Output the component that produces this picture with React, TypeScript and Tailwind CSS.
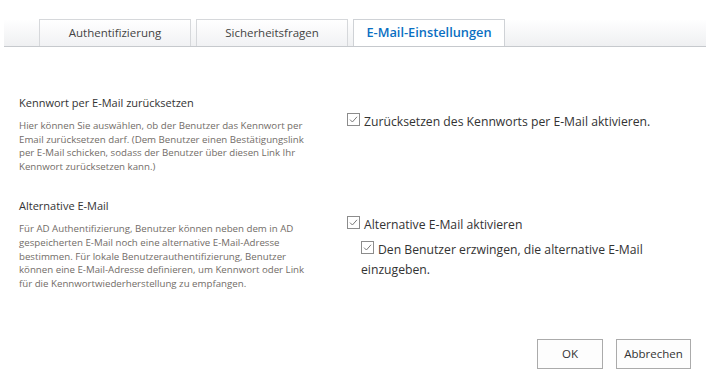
import React from "react"

const font = { fontFamily: '"Open Sans", "Noto Sans", Arial, sans-serif' }

const Check = () => (
  <span className="inline-block w-[13px] h-[13px] border border-[#8c8c8c] bg-white mr-[4px] shrink-0">
    <svg className="block" width="11" height="11" viewBox="0 0 11 11">
      <path d="M2 5.6 L4.4 8 L9 2.8" fill="none" stroke="#7a7a7a" strokeWidth="1" />
    </svg>
  </span>
)

const Tab = ({ label, active }: { label: string; active?: boolean }) => (
  <div
    className={
      active
        ? "w-[152px] h-[27px] border-t border-l border-r border-[#cfd2d6] bg-white flex items-center justify-center text-[12.8px] font-semibold text-[#0a6fc2]"
        : "w-[152px] h-[27px] border-t border-l border-r border-[#d6d8db] bg-gradient-to-b from-white to-[#f1f2f4] flex items-center justify-center text-[11.5px] text-[#444]"
    }>
    {label}
  </div>
)

const Section = ({
  title,
  lines,
  children,
}: {
  title: string
  lines: string[]
  children: React.ReactNode
}) => (
  <div className="grid grid-cols-[328px_1fr]">
    <div>
      <div className="text-[11px] leading-[16px] text-[#333]">{title}</div>
      <div className="mt-[8px] text-[9.7px] leading-[13.6px] text-[#726c67]">
        {lines.map((l) => (
          <div key={l}>{l}</div>
        ))}
      </div>
    </div>
    <div className="pt-[17px] text-[12.2px] leading-[20px] text-[#333]">{children}</div>
  </div>
)

export default function App() {
  return (
    <div className="w-[706px] h-[392px] bg-white flex flex-col" style={font}>
      <div className="mt-[19px] ml-[4px] h-[28px] pl-[35px] flex gap-[5px] border-b border-[#c6c9cd] bg-gradient-to-b from-white to-[#eff0f2]">
        <Tab label="Authentifizierung" />
        <Tab label="Sicherheitsfragen" />
        <Tab label="E-Mail-Einstellungen" active />
      </div>

      <div className="pl-[19px] pt-[48px] flex flex-col gap-[25px]">
        <Section
          title="Kennwort per E-Mail zurücksetzen"
          lines={[
            "Hier können Sie auswählen, ob der Benutzer das Kennwort per",
            "Email zurücksetzen darf. (Dem Benutzer einen Bestätigungslink",
            "per E-Mail schicken, sodass der Benutzer über diesen Link Ihr",
            "Kennwort zurücksetzen kann.)",
          ]}>
          <div>
            <Check />
            Zurücksetzen des Kennworts per E-Mail aktivieren.
          </div>
        </Section>

        <Section
          title="Alternative E-Mail"
          lines={[
            "Für AD Authentifizierung, Benutzer können neben dem in AD",
            "gespeicherten E-Mail noch eine alternative E-Mail-Adresse",
            "bestimmen. Für lokale Benutzerauthentifizierung, Benutzer",
            "können eine E-Mail-Adresse definieren, um Kennwort oder Link",
            "für die Kennwortwiederherstellung zu empfangen.",
          ]}>
          <div>
            <Check />
            Alternative E-Mail aktivieren
          </div>
          <div className="mt-[5px] pl-[14px]">
            <Check />
            Den Benutzer erzwingen, die alternative E-Mail
            <br />
            einzugeben.
          </div>
        </Section>
      </div>

      <div className="mt-auto pb-[23px] pr-[15px] flex justify-end gap-[13px]">
        <button className="w-[66px] h-[30px] border border-[#ababab] bg-[#fdfdfd] text-[11.5px] text-[#333]">
          OK
        </button>
        <button className="w-[75px] h-[30px] border border-[#ababab] bg-[#fdfdfd] text-[11.5px] text-[#333]">
          Abbrechen
        </button>
      </div>
    </div>
  )
}
